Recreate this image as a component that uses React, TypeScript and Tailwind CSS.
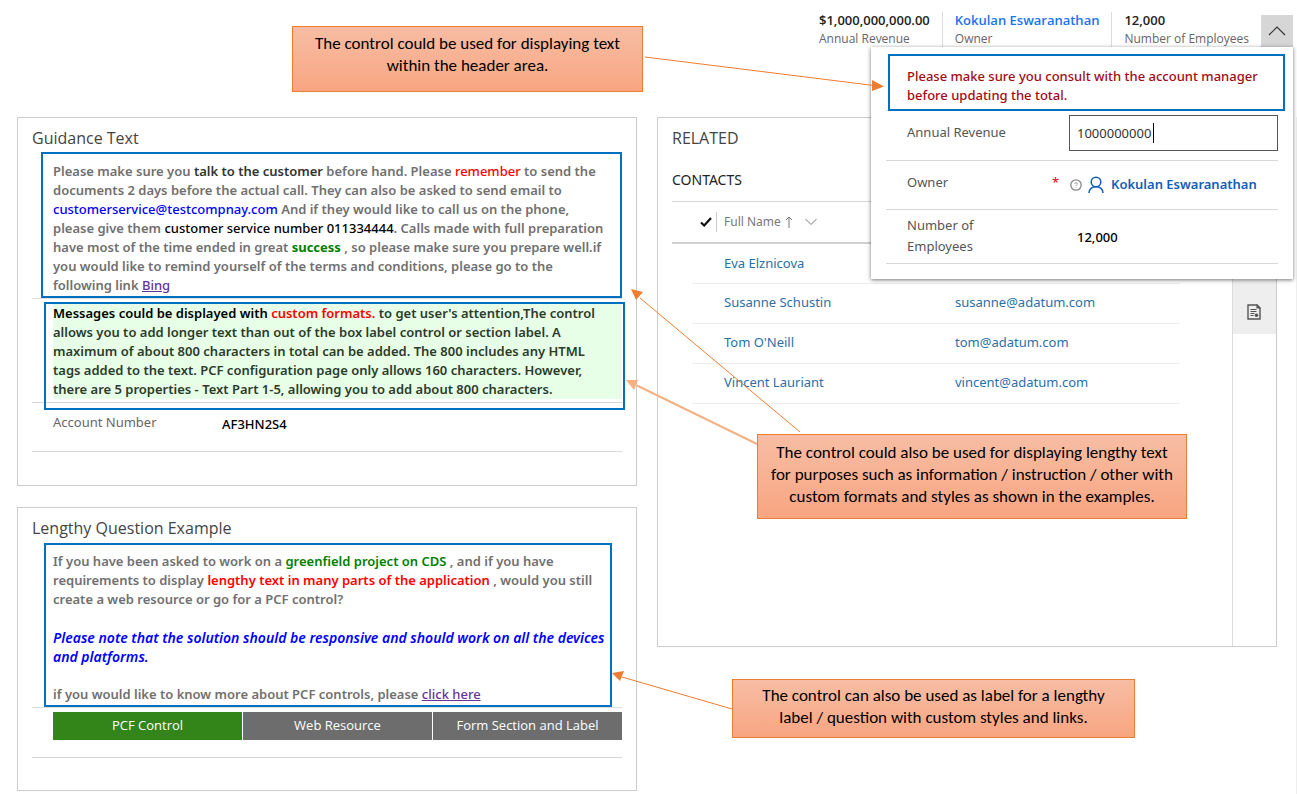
import React from "react";

const guide = "pointer-events-none absolute border-2 border-[#0070c0]";
const body = "whitespace-nowrap text-[13px] leading-[19px] font-semibold text-[#707070]";

function HeaderFact({ value, label, link }: { value: string; label: string; link?: boolean }) {
  return (
    <div className="flex flex-col whitespace-nowrap border-l border-[#dcdcdc] px-3 font-['Open_Sans','Noto_Sans',sans-serif] first:border-l-0">
      {link ? (
        <a href="#owner" className="text-[13px] leading-4 font-semibold text-[#1a73f0]">{value}</a>
      ) : (
        <span className="text-[13px] leading-4 font-semibold text-[#222]">{value}</span>
      )}
      <span className="pt-[3px] text-xs leading-4 text-[#666]">{label}</span>
    </div>
  );
}

function Flyout() {
  return (
    <div className="absolute top-full right-1 z-10 w-[422px] bg-white px-[15px] pb-[15px] text-[13px] text-[#555] shadow-[0_1px_4px_rgba(0,0,0,0.55)]">
      <div className="relative border-b border-[#d8d8d8] pt-5 pb-[5px] pl-[21px]">
        <p className="whitespace-nowrap leading-[19px] font-medium text-[#a30a14]">
          Please make sure you consult with the account manager
          <br />
          before updating the total.
        </p>
        <div className={`${guide} top-[7px] -right-[7px] -bottom-px left-[2px]`} />
      </div>
      <div className="flex items-start border-b border-[#d8d8d8] pt-1 pb-[9px] pl-[21px]">
        <label htmlFor="revenue" className="w-[162px] pt-[7px] leading-5">Annual Revenue</label>
        <div className="relative flex-1">
          <input
            id="revenue"
            defaultValue="1000000000"
            className="h-9 w-full border border-[#555] px-[7px] text-[13px] text-[#333] outline-none"
          />
          <span className="absolute top-2 left-[84px] h-5 w-px bg-black" />
        </div>
      </div>
      <div className="flex h-[49px] items-center border-b border-[#d8d8d8] pl-[21px]">
        <span className="w-[145px] pb-1">Owner</span>
        <span className="w-[18px] pb-1 text-red-600">*</span>
        <svg viewBox="0 0 12 12" className="size-3" fill="none" stroke="#888">
          <circle cx="6" cy="6" r="5.2" strokeWidth="1.3" />
          <path d="M4.9 4.8a1.200 1.200 0 1 1 1.700 1.100q-.5.3-.5.9M6.100 7.800v.8" strokeWidth="0.9" />
        </svg>
        <svg viewBox="0 0 16 18" className="mr-[7px] ml-[6px] h-[18px] w-4" fill="none" stroke="#1160b7" strokeWidth="1.5">
          <circle cx="8" cy="6" r="4.8" />
          <path d="M1 17c.3-3.600 2.500-6.200 7-6.200s6.700 2.600 7 6.200" />
        </svg>
        <a href="#owner" className="whitespace-nowrap font-semibold text-[#1160b7]">Kokulan Eswaranathan</a>
      </div>
      <div className="flex items-center border-b border-[#d8d8d8] pt-[5px] pb-[6px] pl-[21px]">
        <span className="w-[170px] pr-16 leading-[21px]">Number of Employees</span>
        <span className="pt-1 font-medium text-black">12,000</span>
      </div>
    </div>
  );
}

function Card({ title, children, className }: { title: string; children: React.ReactNode; className?: string }) {
  return (
    <section className={`border border-[#cccccc] px-[14px] pt-2 ${className ?? ""}`}>
      <h2 className="font-['Open_Sans','Noto_Sans',sans-serif] text-base leading-6 text-[#444]">{title}</h2>
      {children}
    </section>
  );
}

const contacts = [
  ["Eva Elznicova", "eva@adatum.com"],
  ["Susanne Schustin", "susanne@adatum.com"],
  ["Tom O'Neill", "tom@adatum.com"],
  ["Vincent Lauriant", "vincent@adatum.com"],
];

function Callout({ lines, className }: { lines: string[]; className: string }) {
  return (
    <div
      className={`absolute z-20 flex flex-col items-center justify-center border border-[#ed7d31] bg-linear-to-b from-[#f7bda4] to-[#f8a581] font-[Carlito,Lato,sans-serif] text-[17px] leading-[22px] whitespace-nowrap text-black ${className}`}
    >
      {lines.map((l) => (
        <span key={l}>{l}</span>
      ))}
    </div>
  );
}

export default function App() {
  return (
    <div className="relative min-h-[794px] bg-white font-['Noto_Sans','Open_Sans',sans-serif]">
      <header className="relative flex h-[47px] items-end justify-end pr-1">
        <div className="flex h-[35px]">
          <HeaderFact value="$1,000,000,000.00" label="Annual Revenue" />
          <HeaderFact value="Kokulan Eswaranathan" label="Owner" link />
          <HeaderFact value="12,000" label="Number of Employees" />
        </div>
        <button aria-label="Collapse header" className="flex size-8 items-center justify-center bg-[#d6d6d6]">
          <svg viewBox="0 0 18 10" className="h-[10px] w-[18px]" fill="none" stroke="#333" strokeWidth="1.2">
            <path d="M1 9l8-8 8 8" />
          </svg>
        </button>
        <Flyout />
      </header>

      <main className="mt-[70px] grid grid-cols-2 items-start gap-5 border-r border-[#eeeeee] pr-[19px] pb-[3px] pl-[17px]">
        <div className="flex flex-col gap-[21px]">
          <Card title="Guidance Text" className="pb-[33px]">
            <div className="relative border-b border-[#dddddd] pt-3 pb-[3px] pl-[21px]">
              <p className={body}>
                Please make sure you <b className="font-semibold text-[#333]">talk to the customer</b> before hand. Please{" "}
                <span className="font-medium text-[#ff0000]">remember</span> to send the
                <br />
                documents 2 days before the actual call. They can also be asked to send email to
                <br />
                <span className="font-medium text-[#0000ff]">customerservice@testcompnay.com</span> And if they would like to call us on the phone,
                <br />
                please give them <span className="font-medium text-black">customer service number 011334444</span>. Calls made with full preparation
                <br />
                have most of the time ended in great <b className="font-bold text-[#008000]">success</b> , so please make sure you prepare well.if
                <br />
                you would like to remind yourself of the terms and conditions, please go to the
                <br />
                following link <a href="#bing" className="font-medium text-[#663399] underline">Bing</a>
              </p>
              <div className={`${guide} top-[2px] right-0 bottom-0 left-[9px]`} />
            </div>
            <div className="relative border-b border-[#d8d8d8] pt-[5px] pb-[3px] pl-[21px]">
              <p className="bg-[#e6ffe6] text-[13px] leading-[19px] font-semibold whitespace-nowrap text-[#2c3b2c]">
                <b className="font-semibold text-black">Messages could be displayed with <span className="text-[#ff0000]">custom formats.</span></b> to get user's attention,The control
                <br />
                allows you to add longer text than out of the box label control or section label. A
                <br />
                maximum of about 800 characters in total can be added. The 800 includes any HTML
                <br />
                tags added to the text. PCF configuration page only allows 160 characters. However,
                <br />
                there are 5 properties - Text Part 1-5, allowing you to add about 800 characters.
              </p>
              <div className={`${guide} top-[3px] -right-[3px] -bottom-2 left-3`} />
            </div>
            <div className="flex h-[49px] items-center border-b border-[#d8d8d8] pb-2 pl-[21px] text-[13px]">
              <span className="w-[169px] text-[#666]">Account Number</span>
              <span className="pt-1 font-medium text-black">AF3HN2S4</span>
            </div>
          </Card>

          <Card title="Lengthy Question Example" className="pb-8">
            <div className="relative border-b border-[#dddddd] pt-3 pb-[3px] pl-[21px]">
              <p className={body}>
                If you have been asked to work on a <span className="text-[#008000]">greenfield project on CDS</span> , and if you have
                <br />
                requirements to display <span className="text-[#ff0000]">lengthy text in many parts of the application</span> , would you still
                <br />
                create a web resource or go for a PCF control?
              </p>
              <p className="my-[19px] text-sm leading-[19px] font-semibold whitespace-nowrap text-[#0000ff] italic">
                Please note that the solution should be responsive and should work on all the devices
                <br />
                and platforms.
              </p>
              <p className={body}>
                if you would like to know more about PCF controls, please{" "}
                <a href="#more" className="font-medium text-[#663399] underline">click here</a>
              </p>
              <div className={`${guide} top-[3px] right-[10px] bottom-0 left-3`} />
            </div>
            <div className="border-b border-[#d8d8d8] pt-1 pb-[17px] pl-[21px]">
              <div className="grid h-7 grid-cols-3 gap-px font-['Open_Sans','Noto_Sans',sans-serif] text-[13px] text-white">
                <button className="bg-[#338519]">PCF Control</button>
                <button className="bg-[#6d6d6d]">Web Resource</button>
                <button className="bg-[#6d6d6d]">Form Section and Label</button>
              </div>
            </div>
          </Card>
        </div>

        <section className="flex h-[530px] border border-[#cccccc]">
          <div className="flex-1 pt-2 pl-[14px]">
            <h2 className="font-['Open_Sans','Noto_Sans',sans-serif] text-base leading-6 text-[#444]">RELATED</h2>
            <h3 className="mt-[18px] text-sm leading-6 text-[#222]">CONTACTS</h3>
            <div className="mt-[9px] mr-[52px] border-t border-[#d8d8d8]">
              <table className="w-full table-fixed text-left text-[13px]">
                <thead>
                  <tr className="h-[41px] border-b-2 border-[#d0d0d0] text-xs text-[#777]">
                    <th className="w-5" />
                    <th className="w-[25px] font-normal">
                      <div className="flex h-5 items-center justify-end border-r border-[#ccc] pr-1">
                        <svg viewBox="0 0 12 10" className="h-[10px] w-3" fill="none" stroke="#111" strokeWidth="2.2">
                          <path d="M1 5.500l3.200 3L11 1" />
                        </svg>
                      </div>
                    </th>
                    <th className="w-[238px] pl-[7px] font-normal">
                      <div className="flex items-center">
                        Full Name
                        <svg viewBox="0 0 8 12" className="ml-1 h-3 w-2" fill="none" stroke="#777">
                          <path d="M4 12V1M1 4l3-3 3 3" />
                        </svg>
                        <svg viewBox="0 0 12 8" className="ml-3 h-2 w-3" fill="none" stroke="#777">
                          <path d="M.5 1L6 6.500 11.500 1" />
                        </svg>
                      </div>
                    </th>
                    <th className="font-normal" />
                  </tr>
                </thead>
                <tbody>
                  {contacts.map(([name, mail]) => (
                    <tr key={name} className="h-10">
                      <td />
                      <td className="border-b border-[#ececec]" />
                      <td className="border-b border-[#ececec] pl-[7px]">
                        <a href="#contact" className="text-[#2a6fa8]">{name}</a>
                      </td>
                      <td className="border-b border-[#ececec]">
                        <a href="#mail" className="text-[#2a6fa8]">{mail}</a>
                      </td>
                    </tr>
                  ))}
                </tbody>
              </table>
            </div>
          </div>
          <aside className="w-11 border-l border-[#dcdcdc] pt-[162px]">
            <button aria-label="Related records" className="flex h-[54px] w-full items-center justify-center bg-[#eeeeee] pt-[9px] pr-[2px]">
              <svg viewBox="0 0 14 16" className="h-4 w-[14px]" fill="none" stroke="#555" strokeWidth="1.1">
                <path d="M1 1h9l3 3v11H1z" strokeWidth="1.4" />
                <path d="M10 1v3h3z" fill="#555" />
                <path d="M3.500 5.500h6M3.500 7.500h6M3.500 9.500h4M3.500 11.500h3" />
                <circle cx="9.500" cy="11.300" r="1.800" fill="#555" stroke="none" />
              </svg>
            </button>
          </aside>
        </section>
      </main>

      <svg viewBox="0 0 1297 794" width="1297" height="794" className="pointer-events-none absolute top-0 left-0 z-20" fill="none">
        <g stroke="#ed7d31">
          <path d="M645 57L874 85.500" />
          <path d="M800 432L640 298" />
          <path d="M732 709L622 677" />
        </g>
        <path d="M757 444L637 385.500" stroke="#f4b183" strokeWidth="2" />
        <path d="M884 86.500L872 91V80z" fill="#ed7d31" />
        <path d="M631 289l12 3-7 8z" fill="#ed7d31" />
        <path d="M612 673l12-2-4 10z" fill="#ed7d31" />
        <path d="M626 380l12 0-4 10z" fill="#f4b183" />
      </svg>
      <Callout
        className="top-[26px] left-[292px] h-[66px] w-[351px] pb-2"
        lines={["The control could be used for displaying text", "within the header area."]}
      />
      <Callout
        className="top-[434px] left-[757px] h-[85px] w-[430px] pb-1"
        lines={[
          "The control could also be used for displaying lengthy text",
          "for purposes such as information / instruction / other with",
          "custom formats and styles as shown in the examples.",
        ]}
      />
      <Callout
        className="top-[679px] left-[732px] h-[59px] w-[403px] pb-1"
        lines={["The control can also be used as label for a lengthy", "label / question with custom styles and links."]}
      />
    </div>
  );
}
